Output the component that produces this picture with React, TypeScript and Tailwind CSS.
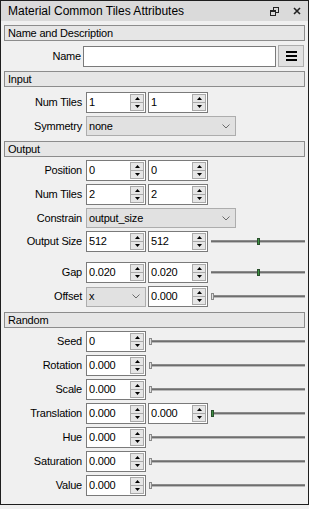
import type { ReactNode } from 'react';

// Small triangle used on spin buttons
const Arrow = ({ down }: { down?: boolean }) => (
  <svg width="5" height="3" viewBox="0 0 5 3">
    {down ? <polygon points="0,0 5,0 2.5,3" fill="#000" /> : <polygon points="2.5,0 5,3 0,3" fill="#000" />}
  </svg>
);

const SpinBox = ({ value }: { value: string }) => (
  <div className="flex h-[21px] w-[60px] shrink-0 border border-[#7a7a7a] bg-white">
    <span className="flex-1 pl-[2px] leading-[19px]">{value}</span>
    <div className="flex flex-col py-[1px] pr-[1px]">
      <div className="flex h-[9px] w-[14px] items-center justify-center border border-[#a9a9a9] bg-[#e6e6e6]">
        <Arrow />
      </div>
      <div className="flex h-[8px] w-[14px] items-center justify-center border border-t-0 border-[#a9a9a9] bg-[#e6e6e6]">
        <Arrow down />
      </div>
    </div>
  </div>
);

const Chevron = () => (
  <svg width="8" height="5" viewBox="0 0 8 5">
    <polyline points="0.5,0.5 4,4 7.5,0.5" fill="none" stroke="#6b6b6b" strokeWidth="1" />
  </svg>
);

const Combo = ({ value, width }: { value: string; width: string }) => (
  <div className={`flex h-[20px] shrink-0 items-center justify-between border border-[#adadad] bg-[#e1e1e1] pl-[2px] pr-[5px] ${width}`}>
    <span>{value}</span>
    <Chevron />
  </div>
);

const Slider = ({ pos, active }: { pos: number; active?: boolean }) => (
  <div className="relative ml-[1px] flex h-[21px] flex-1 items-center">
    <div className="h-[3px] w-full border-t border-b border-t-[#8a8a8a] border-b-[#b9b9b9] bg-[#6e6e6e]" />
    <div
      className={`absolute top-[7px] h-[7px] w-[3px] border ${active ? 'border-[#2a4f2c] bg-[#3c9142]' : 'border-[#8a8a8a] bg-[#e2e2e2]'}`}
      style={{ left: `calc(${pos}% - ${pos > 0 ? 1 : 0}px)` }}
    />
  </div>
);

const Row = ({ label, children, className = '' }: { label: string; children: ReactNode; className?: string }) => (
  <div className={`flex items-center ${className}`}>
    <div className="w-[81px] shrink-0 text-right">{label}</div>
    <div className="ml-[4px] flex flex-1 items-center gap-[2px] pr-[3px]">{children}</div>
  </div>
);

const Header = ({ title, className = '' }: { title: string; className?: string }) => (
  <div className={`mx-[3px] flex h-[16px] items-center border border-[#8c8c8c] bg-[#e6e6e6] pl-[3px] ${className}`}>
    {title}
  </div>
);

export default function App() {
  return (
    <div className="h-[509px] w-[309px] bg-[#f0f0f0] font-['Liberation_Sans',Arial,sans-serif] text-[11px] tracking-[-0.2px] text-black">
      <div className="flex h-[505px] flex-col border border-[#1e1e1e]">
        {/* Title bar */}
        <div className="flex h-[20px] shrink-0 items-center bg-[#dadada] pl-[7px] pr-[7px]">
          <span className="flex-1 text-[12px] tracking-normal">Material Common Tiles Attributes</span>
          <svg width="9" height="9" viewBox="0 0 9 9" className="mr-[14px]">
            <rect x="3.5" y="0.5" width="5" height="5" fill="none" stroke="#222" />
            <rect x="0.5" y="3.5" width="5" height="5" fill="#dadada" stroke="#222" />
            <line x1="0.5" y1="4.5" x2="5.5" y2="4.5" stroke="#222" />
          </svg>
          <svg width="8" height="8" viewBox="0 0 8 8">
            <path d="M1 1 L7 7 M7 1 L1 7" stroke="#222" strokeWidth="1.6" />
          </svg>
        </div>

        <Header title="Name and Description" className="mt-[4px]" />
        <div className="mt-[4px] flex h-[22px] items-center">
          <div className="w-[80px] shrink-0 text-right">Name</div>
          <div className="ml-[2px] h-[21px] w-[193px] border border-[#7a7a7a] bg-white" />
          <div className="ml-[2px] flex h-[22px] w-[26px] flex-col items-center justify-center gap-[2px] border border-[#adadad] bg-[#e1e1e1]">
            <div className="h-[2px] w-[11px] bg-black" />
            <div className="h-[2px] w-[11px] bg-black" />
            <div className="h-[2px] w-[11px] bg-black" />
          </div>
        </div>

        <Header title="Input" className="mt-[4px]" />
        <Row label="Num Tiles" className="mt-[5px]">
          <SpinBox value="1" />
          <SpinBox value="1" />
        </Row>
        <Row label="Symmetry" className="mt-[3px]">
          <Combo value="none" width="w-[150px]" />
        </Row>

        <Header title="Output" className="mt-[5px]" />
        <Row label="Position" className="mt-[3px]">
          <SpinBox value="0" />
          <SpinBox value="0" />
        </Row>
        <Row label="Num Tiles" className="mt-[3px]">
          <SpinBox value="2" />
          <SpinBox value="2" />
        </Row>
        <Row label="Constrain" className="mt-[3px]">
          <Combo value="output_size" width="w-[150px]" />
        </Row>
        <Row label="Output Size" className="mt-[3px]">
          <SpinBox value="512" />
          <SpinBox value="512" />
          <Slider pos={50} active />
        </Row>
        <Row label="Gap" className="mt-[10px]">
          <SpinBox value="0.020" />
          <SpinBox value="0.020" />
          <Slider pos={50} active />
        </Row>
        <Row label="Offset" className="mt-[3px]">
          <Combo value="x" width="w-[60px]" />
          <SpinBox value="0.000" />
          <Slider pos={0} />
        </Row>

        <Header title="Random" className="mt-[5px]" />
        <Row label="Seed" className="mt-[3px]">
          <SpinBox value="0" />
          <Slider pos={0} />
        </Row>
        <Row label="Rotation" className="mt-[3px]">
          <SpinBox value="0.000" />
          <Slider pos={0} />
        </Row>
        <Row label="Scale" className="mt-[3px]">
          <SpinBox value="0.000" />
          <Slider pos={0} />
        </Row>
        <Row label="Translation" className="mt-[3px]">
          <SpinBox value="0.000" />
          <SpinBox value="0.000" />
          <Slider pos={0} active />
        </Row>
        <Row label="Hue" className="mt-[3px]">
          <SpinBox value="0.000" />
          <Slider pos={0} />
        </Row>
        <Row label="Saturation" className="mt-[3px]">
          <SpinBox value="0.000" />
          <Slider pos={0} />
        </Row>
        <Row label="Value" className="mt-[3px]">
          <SpinBox value="0.000" />
          <Slider pos={0} />
        </Row>
      </div>
    </div>
  );
}
